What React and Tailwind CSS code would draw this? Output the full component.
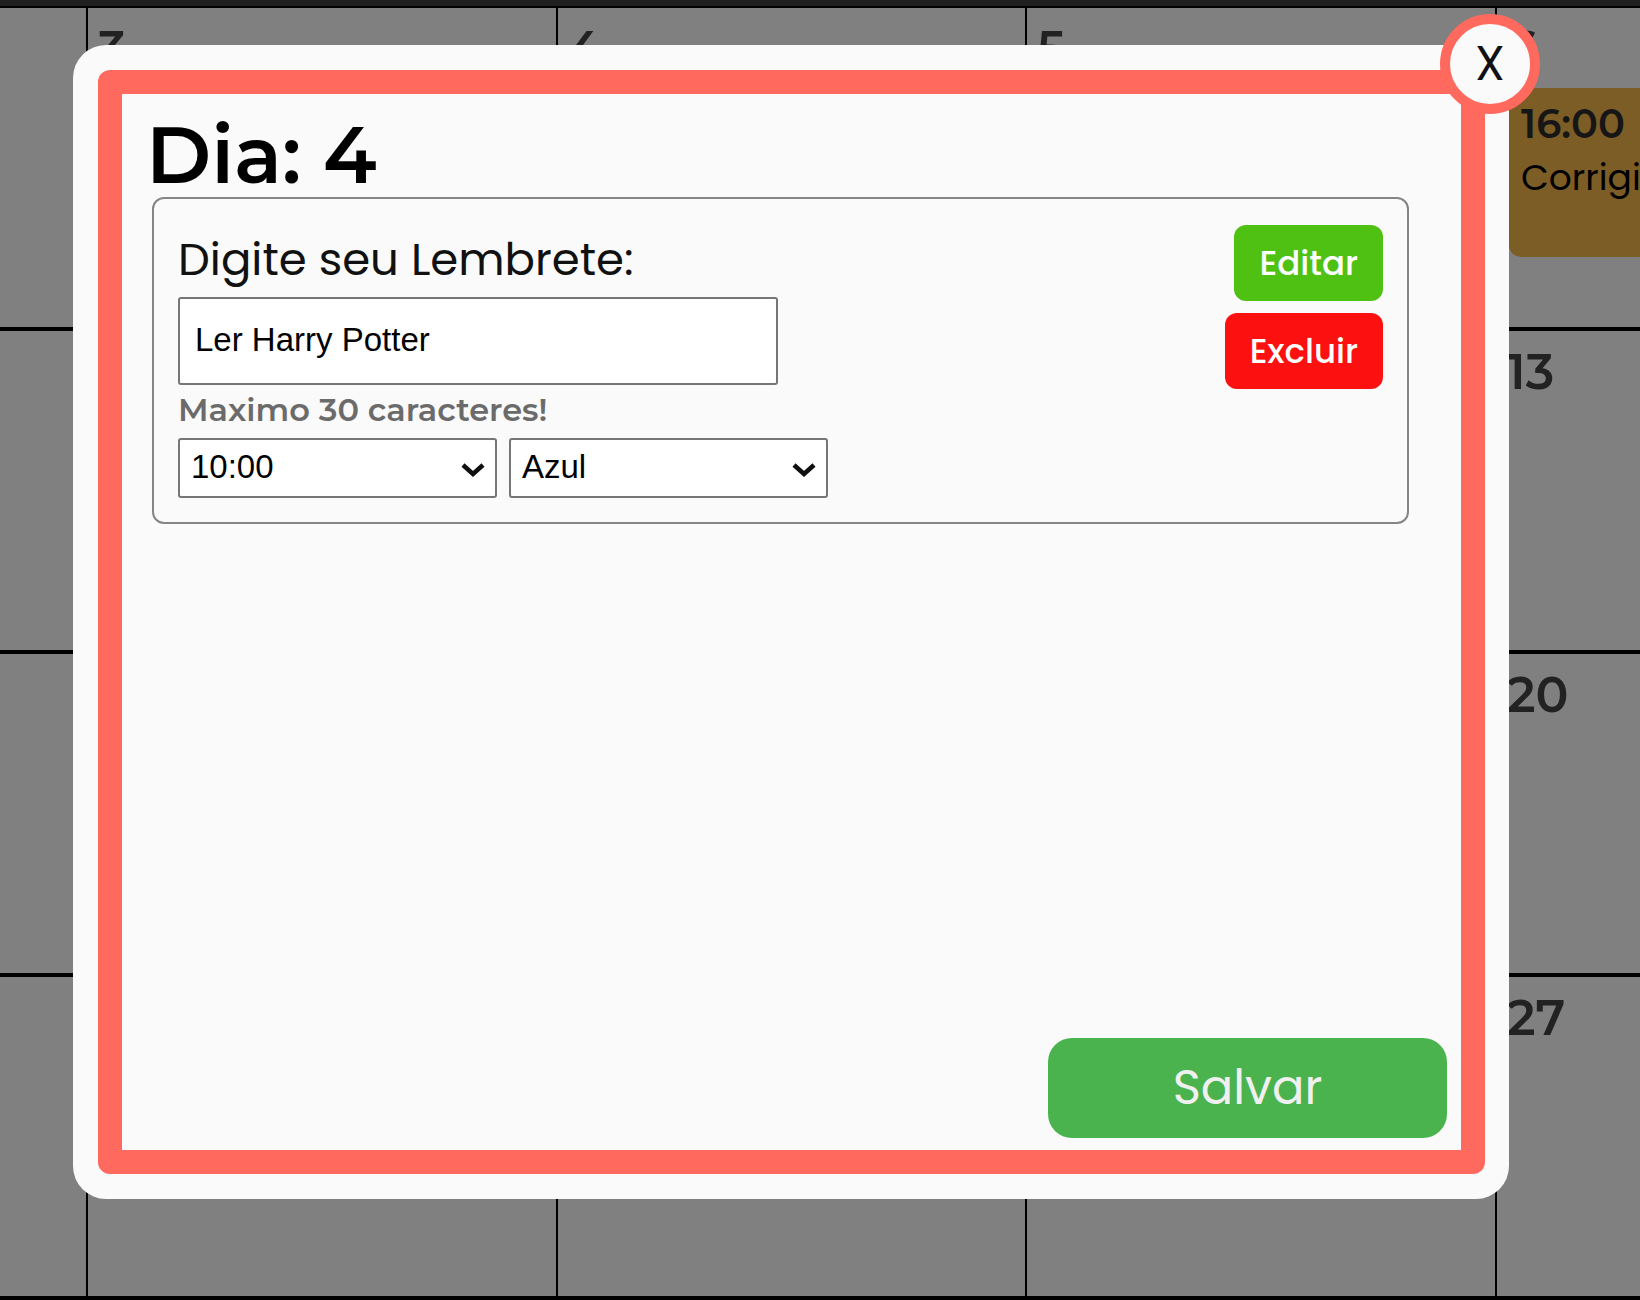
import React, { useState } from "react";

const weeks = [
  ["3", "4", "5", "6"],
  ["", "", "", "13"],
  ["", "", "", "20"],
  ["", "", "", "27"],
];

const hours = ["08:00", "09:00", "10:00", "11:00", "12:00"];
const colors = ["Azul", "Verde", "Amarelo", "Vermelho"];

const bodyFont = "font-[Poppins,Inter,sans-serif]";
const headingFont = "font-[Montserrat,Inter,sans-serif]";

function Day({ number, children }) {
  return (
    <div className="min-w-0 border-l-2 border-black pl-[10px] pt-3">
      <span className={`block text-[49px] leading-[58px] font-semibold text-[#222222] ${headingFont}`}>{number}</span>
      {children}
    </div>
  );
}

function Calendar() {
  return (
    <div className="flex min-h-screen flex-col bg-[#808080]">
      <div className="h-2 border-b-2 border-black bg-[#202020]" />
      {weeks.map((week, w) => (
        <div
          key={w}
          className="grid h-[323px] grid-cols-[86fr_470fr_469fr_470fr_145fr] border-b-4 border-black"
        >
          <div />
          {week.map((number, d) => (
            <Day key={d} number={number}>
              {number === "6" && (
                <div className="mt-2.5 ml-0.5 h-[169px] w-[440px] rounded-xl bg-[#7d5d26] px-3 pt-2">
                  <p className={`text-[40px] leading-[56px] font-semibold text-[#161616] ${headingFont}`}>16:00</p>
                  <p className={`text-[36px] leading-[52px] text-black ${bodyFont}`}>Corrigir</p>
                </div>
              )}
            </Day>
          ))}
        </div>
      ))}
    </div>
  );
}

function Select({ label, value, onChange, options }) {
  return (
    <div className="relative w-[319px]">
      <select
        aria-label={label}
        value={value}
        onChange={(e) => onChange(e.target.value)}
        className="block h-[60px] w-full appearance-none rounded-[3px] border-2 border-[#767676] bg-white pb-0.5 pl-[11px] font-['Liberation_Sans',Arial,sans-serif] text-[33px] leading-[40px] text-black"
      >
        {options.map((option) => (
          <option key={option}>{option}</option>
        ))}
      </select>
      <svg
        className="pointer-events-none absolute top-[25px] right-3 h-[14px] w-[24px]"
        viewBox="0 0 24 14"
        fill="none"
        stroke="#101010"
        strokeWidth="4.5"
        aria-hidden="true"
      >
        <path d="M2 2 L12 11 L22 2" />
      </svg>
    </div>
  );
}

export default function App() {
  const [text, setText] = useState("Ler Harry Potter");
  const [hour, setHour] = useState("10:00");
  const [color, setColor] = useState("Azul");

  return (
    <div className="relative h-screen overflow-hidden">
      <Calendar />
      <div className="absolute inset-0 flex pt-[45px] pr-[131px] pb-[101px] pl-[73px]">
        <div role="dialog" aria-labelledby="day-title" className="relative flex flex-1 rounded-[33px] bg-[#fafafa] py-[25px] pr-6 pl-[25px]">
          <div className="flex flex-1 flex-col rounded-xl bg-[#ff695e] p-6">
            <div className="flex flex-1 flex-col bg-[#fafafa] pt-5 pb-3">
              <h1 id="day-title" className={`pl-6 text-[79px] leading-[83px] font-semibold text-black ${headingFont}`}>
                Dia: 4
              </h1>
              <section className="mr-[52px] ml-[30px] flex items-start justify-between rounded-xl border-2 border-[#858585] p-6">
                <div className="flex flex-col items-start pt-1">
                  <label htmlFor="reminder" className={`pb-1 text-[45px] leading-[66px] text-[#111111] ${bodyFont}`}>
                    Digite seu Lembrete:
                  </label>
                  <input
                    id="reminder"
                    maxLength={30}
                    value={text}
                    onChange={(e) => setText(e.target.value)}
                    className="h-[88px] w-[600px] rounded-[3px] border-2 border-[#767676] bg-white px-[15px] pb-0.5 font-['Liberation_Sans',Arial,sans-serif] text-[33px] text-black"
                  />
                  <p className={`mt-[5px] text-[32px] leading-[40px] font-semibold text-[#6b6b6b] ${headingFont}`}>
                    Maximo 30 caracteres!
                  </p>
                  <div className="mt-2 flex gap-3">
                    <Select label="Horário" value={hour} onChange={setHour} options={hours} />
                    <Select label="Cor" value={color} onChange={setColor} options={colors} />
                  </div>
                </div>
                <div className="flex flex-col items-end gap-3 pt-[2px]">
                  <button type="button" className={`h-[76px] rounded-xl bg-[#4fc113] px-[25px] text-[34px] font-medium text-white ${bodyFont}`}>
                    Editar
                  </button>
                  <button type="button" className={`h-[76px] rounded-xl bg-[#fd1010] px-[25px] text-[34px] font-medium text-white ${bodyFont}`}>
                    Excluir
                  </button>
                </div>
              </section>
              <button
                type="button"
                className={`mt-auto mr-[14px] h-[100px] w-[399px] self-end rounded-3xl bg-[#4ab34e] text-[48px] text-[#f0f0f0] ${bodyFont}`}
              >
                Salvar
              </button>
            </div>
          </div>
          <button
            type="button"
            aria-label="Fechar"
            className={`absolute -top-[31px] -right-[31px] h-[100px] w-[100px] rounded-full border-10 border-[#ff695e] bg-[#fafafa] text-[48px] leading-none text-[#111111] ${bodyFont}`}
          >
            X
          </button>
        </div>
      </div>
    </div>
  );
}
